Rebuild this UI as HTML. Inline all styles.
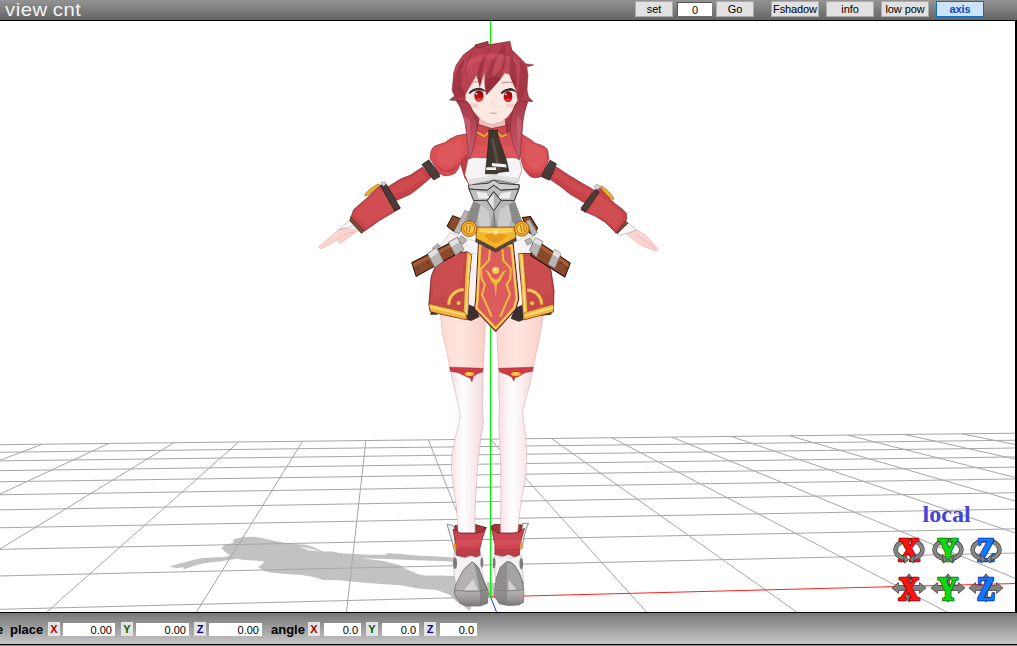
<!DOCTYPE html>
<html><head><meta charset="utf-8"><title>view cnt</title>
<style>
html,body{margin:0;padding:0;background:#fff;overflow:hidden}
body{width:1017px;height:646px;position:relative;font-family:"Liberation Sans",sans-serif}
#top{position:absolute;left:0;top:0;width:1017px;height:20px;background:linear-gradient(#939393,#646464);border-bottom:1px solid #000}
#ttl{position:absolute;left:5px;top:-1px;font-size:19.5px;line-height:20px;color:#f4f4f4;letter-spacing:.5px;word-spacing:-1px;white-space:nowrap;transform:scale(1.04,.94);transform-origin:0 16px}
.b{position:absolute;top:1px;height:14px;line-height:14px;border:1px solid #adadad;background:#e1e1e1;font-size:11px;letter-spacing:-.1px;text-align:center;color:#000;white-space:nowrap}
.b.ax{background:#cce4f7;border-color:#0a6fc9;color:#1043c4;font-weight:bold}
.tin{position:absolute;top:2px;height:13px;line-height:14px;background:#fff;font-size:11px;text-align:center;border-top:1px solid #555;border-left:1px solid #555}
#vp{position:absolute;left:0;top:21px;width:1015px;height:591px;background:#fff;overflow:hidden}
#rb{position:absolute;left:1015px;top:20px;width:2px;height:593px;background:#000}
#bot{position:absolute;left:0;top:612px;width:1017px;height:31px;border-top:1px solid #000;border-bottom:1px solid #000;background:linear-gradient(#787878,#c6c6c6)}
#bot2{position:absolute;left:0;top:645px;width:1017px;height:1px;background:#9a9a9a}
.lb{position:absolute;top:9px;font-size:13px;font-weight:bold;line-height:16px;color:#000;white-space:nowrap}
.k{position:absolute;top:9px;height:14px;width:12px;background:#e4e4e4;font-size:11px;font-weight:bold;line-height:14px;text-align:center}
.v{position:absolute;top:10px;height:13px;background:#fff;font-size:11px;line-height:14px;text-align:right;color:#000;box-sizing:border-box;padding-right:3px}
svg{position:absolute;left:0;top:0}
</style></head><body>
<div id="vp"><svg width="1015" height="591" viewBox="0 21 1015 591">
<!-- SHADOW (actual coords) -->
<path d="M169.4,566.7 L177.7,563.9 187.5,561.4 199.3,558.4 211.1,557.4 224.9,556.9 229.8,555.5 224.9,551.5 221.4,548.2 224.9,544.7 232.8,543.1 233.7,539.2 242.6,537.2 254.4,536.8 264.2,538.4 274.1,540.7 285.9,543.1 297.7,544.3 305.5,544.7 313.4,547 318.3,549.6 323.2,551.5 333.1,551.5 339.4,553.1 353.6,553.9 369.3,554.7 385.1,554.7 388.2,553.1 400.8,553.9 416.5,555.5 432.3,556.2 446.4,557 458,558 458,562 440.1,561 408.7,559.9 385.1,558.9 361.5,558.3 383.5,561 399.2,564.9 405.5,568.8 418.1,574.3 424.4,575.6 440.1,575.6 458,576.2 460,590 472,604 470,611 460.6,604.2 455.9,601.1 449.6,594.8 437,590.1 418.1,588.5 400.8,585.3 377.2,583.8 350.5,581.4 337,580.1 323.2,580.1 313.4,577.1 301.6,575.1 289.8,574.2 278,573.2 269.1,572.2 262.3,569.8 257.9,567.3 262.3,564.3 264.2,561.4 254.4,560.4 244.6,560 236.7,558.8 228.8,560 219,561.4 209.2,562.4 199.3,564.3 191.5,566.7 183.6,569.2 183.2,567.3 176.7,567.9Z" fill="#c2c2c2"/>
<path d="M487,582 L495,583 495.5,598 488,597Z" fill="#c2c2c2"/>
<path d="M299,546.5 L312,548.5 320,551.5 308,550.5Z" fill="#ececec"/>
<path d="M-2.0 609.4L490.5 596.9M-2.0 576.0L1017.0 553.0M-2.0 549.4L1017.0 528.8M-2.0 527.8L1017.0 509.1M-2.0 509.9L1017.0 492.7M-2.0 494.8L1017.0 478.9M-2.0 481.8L1017.0 467.1M-2.0 470.7L1017.0 456.9M-2.0 460.9L1017.0 448.0M-2.0 452.3L1017.0 440.2M-2.0 444.7L1017.0 433.2M-2.0 461.0L42.4 444.2M-2.0 495.0L108.6 443.5M-2.0 550.2L174.0 442.7M45.6 613.0L238.7 442.0M195.9 613.0L302.6 441.3M346.4 613.0L365.9 440.6M490.5 596.9L428.4 439.9M647.4 613.0L490.3 439.2M798.1 613.0L551.5 438.5M948.8 613.0L612.0 437.8M1017.0 579.1L671.9 437.1M1017.0 533.6L731.1 436.4M1017.0 501.6L789.7 435.8M1017.0 477.9L847.7 435.1M1017.0 459.5L905.1 434.5M1017.0 444.9L961.9 433.8" fill="none" stroke="#a6a6a6" stroke-width="1"/>
<path d="M490.5 596.9L1017.0 583.5" stroke="#ff2020" stroke-width="1" fill="none"/>
<path d="M496.9 613.0L490.5 596.9" stroke="#2030ff" stroke-width="1" fill="none"/>
<path d="M490.6 21V597" stroke="#00f400" stroke-width="1.25" fill="none"/>
<defs>
<linearGradient id="gSkinL" x1="0" x2="1"><stop offset="0" stop-color="#fbd9d2"/><stop offset=".45" stop-color="#fee6df"/><stop offset="1" stop-color="#f8cfc8"/></linearGradient>
<linearGradient id="gStk" x1="0" x2="1"><stop offset="0" stop-color="#f6dfe2"/><stop offset=".4" stop-color="#ffffff"/><stop offset="1" stop-color="#f3d9dd"/></linearGradient>
<linearGradient id="gHair" x1="0" y1="0" x2="0" y2="1"><stop offset="0" stop-color="#ae3a48"/><stop offset=".3" stop-color="#c04858"/><stop offset=".65" stop-color="#ae3c4a"/><stop offset="1" stop-color="#a23644"/></linearGradient>
<linearGradient id="gStr" x1="0" y1="0" x2="0" y2="1"><stop offset="0" stop-color="#a83a48"/><stop offset=".5" stop-color="#b84858"/><stop offset="1" stop-color="#cc6070"/></linearGradient>
<linearGradient id="gArm" x1="0" y1="0" x2="0" y2="1"><stop offset="0" stop-color="#c9c6c6"/><stop offset="1" stop-color="#a9a6a6"/></linearGradient>
<linearGradient id="gFoot" x1="0" y1="0" x2="0" y2="1"><stop offset="0" stop-color="#b9b5b5"/><stop offset=".6" stop-color="#9c9898"/><stop offset="1" stop-color="#7d7979"/></linearGradient>
</defs>
<!-- BOOT BACK RIMS: zoom B2 [440,515] x9.94 -->
<g transform="translate(440,515) scale(0.100604)" stroke-linejoin="round">
<path d="M130,140 L150,105 200,100 350,95 460,125 420,170 330,185 200,182Z" fill="#a8323c" stroke="#2a0c10" stroke-width="6"/>
<path d="M510,135 L512,108 545,92 600,95 770,95 815,100 840,130 790,170 700,185 570,180Z" fill="#a8323c" stroke="#2a0c10" stroke-width="6"/>
</g>
<!-- LEGS: zoom L1 [390,310] -->
<g transform="translate(390,310) scale(0.201207)" stroke-linejoin="round">
<path d="M245,-40 L250,20 262,120 280,200 298,290 463,295 470,150 474,30 474,-40Z" fill="url(#gSkinL)" stroke="#d98a8a" stroke-width="2"/>
<path d="M526,-40 L528,60 535,200 540,295 712,290 725,220 745,130 762,20 766,-40Z" fill="url(#gSkinL)" stroke="#d98a8a" stroke-width="2"/>
<path d="M298,288 L315,370 335,450 348,520 342,570 325,627 308,727 305,787 315,877 330,977 339,1107 423,1107 422,1007 428,897 435,777 450,647 464,560 459,480 462,400 463,292Z" fill="url(#gStk)" stroke="#c98a94" stroke-width="2"/>
<path d="M540,292 L540,400 545,480 540,560 545,647 550,777 551,947 549,1107 634,1107 652,947 675,827 680,727 675,627 662,542 660,500 675,440 695,370 712,288Z" fill="url(#gStk)" stroke="#c98a94" stroke-width="2"/>
<path d="M296,284 L463,290 460,308 432,318 415,330 407,357 398,338 378,330 340,312 300,304Z" fill="#cc3c44" stroke="#7a2026" stroke-width="2"/>
<path d="M540,290 L712,284 708,304 670,312 640,330 622,336 615,354 606,334 580,320 545,308Z" fill="#cc3c44" stroke="#7a2026" stroke-width="2"/>
<ellipse cx="395" cy="318" rx="24" ry="10" fill="#f4b62a"/><ellipse cx="392" cy="315" rx="12" ry="4" fill="#fde48a"/>
<ellipse cx="626" cy="318" rx="24" ry="10" fill="#f4b62a"/><ellipse cx="623" cy="315" rx="12" ry="4" fill="#fde48a"/>
</g>
<!-- BOOTS lower: zoom B3 [440,550] x9.94 -->
<g transform="translate(440,550) scale(0.100604)" stroke-linejoin="round">
<path d="M138,40 L180,60 240,82 300,60 360,76 410,50 426,100 412,200 440,300 470,390 300,400 160,350 148,300 135,200Z" fill="#f4f1f1" stroke="#8a8686" stroke-width="4"/>
<ellipse cx="150" cy="130" rx="20" ry="58" fill="#7e7a7a"/><ellipse cx="416" cy="125" rx="14" ry="50" fill="#7e7a7a"/>
<path d="M315,120 L230,200 165,330 145,400 150,450 200,530 270,556 400,556 470,530 479,440 470,390 430,300 385,180 340,130Z" fill="#8f8c8c" stroke="#3a3636" stroke-width="6"/>
<path d="M318,124 L232,202 168,330 148,400 300,410 395,405 340,132Z" fill="#b4b1b1"/>
<path d="M330,290 L378,400 235,400Z" fill="#d8d6d6"/>
<path d="M148,402 L300,412 395,407 470,392 478,440 470,528 400,553 270,553 200,528 152,450Z" fill="url(#gFoot)"/>
<path d="M395,407 L470,392 478,440 470,528 400,553Z" fill="#7c7979" opacity=".7"/>
<path d="M148,402 L300,412 395,407 470,392" fill="none" stroke="#5e5a5a" stroke-width="5"/>
<path d="M545,40 L600,76 650,56 700,80 760,60 802,50 816,100 820,200 832,330 700,400 560,350 548,250 540,150Z" fill="#f4f1f1" stroke="#8a8686" stroke-width="4"/>
<ellipse cx="538" cy="130" rx="14" ry="55" fill="#7e7a7a"/><ellipse cx="808" cy="135" rx="18" ry="58" fill="#7e7a7a"/>
<path d="M665,115 L600,170 560,280 545,400 548,470 590,535 680,551 780,546 830,520 833,420 825,330 790,230 740,150 700,120Z" fill="#a6a3a3" stroke="#3a3636" stroke-width="6"/>
<path d="M665,119 L602,172 563,280 548,400 665,405Z" fill="#908d8d"/>
<path d="M680,295 L762,392 680,397Z" fill="#d4d2d2"/>
<path d="M548,402 L665,407 832,397 833,420 830,518 780,543 680,548 590,532 550,470Z" fill="url(#gFoot)"/>
<path d="M548,402 L665,407 668,548 590,532 550,470Z" fill="#7c7979" opacity=".6"/>
<path d="M548,402 L665,407 832,397" fill="none" stroke="#5e5a5a" stroke-width="5"/>
</g>
<!-- BOOTS upper: zoom B2 [440,515] x9.94 -->
<g transform="translate(440,515) scale(0.100604)" stroke-linejoin="round">
<path d="M70,95 L120,100 150,130 135,150 150,260 168,392 150,380 110,230Z" fill="#f0eeee" stroke="#2a2a2a" stroke-width="5"/>
<path d="M130,140 L200,180 330,183 420,168 460,125 420,240 395,340 400,395 370,415 300,400 250,420 165,400 150,250Z" fill="#cd4550" stroke="#4a1218" stroke-width="5"/>
<path d="M150,250 L420,240 410,290 160,310Z" fill="#d9555f" opacity=".6"/>
<path d="M160,330 L398,330 398,392 370,412 300,398 250,418 166,398Z" fill="#b93a45" opacity=".7"/>
<ellipse cx="150" cy="320" rx="12" ry="40" transform="rotate(-8 150 320)" fill="#e0a020"/>
<path d="M820,85 L880,80 860,130 840,200 815,340 800,330 800,280Z" fill="#f0eeee" stroke="#2a2a2a" stroke-width="5"/>
<path d="M510,135 L570,178 700,184 790,168 840,130 800,280 790,395 740,415 680,390 620,410 545,390 545,290Z" fill="#cd4550" stroke="#4a1218" stroke-width="5"/>
<path d="M540,250 L805,245 800,295 545,305Z" fill="#d9555f" opacity=".6"/>
<path d="M546,335 L796,330 790,393 740,413 680,388 620,408 546,388Z" fill="#b93a45" opacity=".7"/>
<ellipse cx="805" cy="300" rx="11" ry="38" transform="rotate(10 805 300)" fill="#e0a020"/>
</g>
<!-- HEAD BACK: zoom H2 [440,35] x9.94 -->
<g transform="translate(440,35) scale(0.100604)" stroke-linejoin="round">
<!-- hair back silhouette -->
<path d="M95,647 L145,607 120,547 130,450 135,380 160,300 230,200 345,112 352,98 475,65 482,95 500,95 695,62 715,150 790,220 850,285 930,298 862,318 875,400 870,450 865,547 880,617 925,662 870,662 845,747 740,800 725,990 360,990 340,800 190,697 160,652Z" fill="url(#gHair)" stroke="#5a1a28" stroke-width="5"/>
<!-- neck -->
<path d="M400,800 L640,800 652,930 375,930Z" fill="#eec2ba"/>
</g>
<!-- TORSO: zoom T1 [400,110] -->
<g transform="translate(400,110) scale(0.201207)" stroke-linejoin="round">
<!-- neck -->
<!-- puff sleeves -->
<path d="M299,269 L319,334 334,359 344,374 348,250 334,224 309,245Z" fill="#bc3e44"/>
<path d="M352,116 L284,127 Q250,140 224,162 Q190,172 169,182 Q152,195 150,234 L150,242 194,314 Q215,328 229,327 Q255,326 274,314 Q292,295 299,269 L309,245 334,224 352,240Z" fill="#d84f54" stroke="#7a2028" stroke-width="3"/>
<path d="M200,185 Q250,160 300,150 L320,200 Q290,250 250,275 Q210,280 180,250Z" fill="#e26064" opacity=".55"/>
<path d="M160,240 L200,300 Q230,318 270,305 Q290,285 296,262 Q260,300 220,300 Q185,280 160,240Z" fill="#b4383e" opacity=".6"/>
<path d="M598,116 L632,137 Q655,150 672,165 Q700,172 717,182 Q732,192 735,205 L740,245 702,330 Q685,338 667,337 Q652,335 642,325 Q622,305 612,285 L600,240 596,200Z" fill="#d84f54" stroke="#7a2028" stroke-width="3"/>
<path d="M625,155 Q670,175 715,195 L725,240 Q705,285 675,300 Q640,290 620,240Z" fill="#e26064" opacity=".55"/>
<path d="M612,285 Q625,315 650,330 Q680,340 702,328 L712,305 Q680,322 650,310 Q625,295 612,285Z" fill="#b4383e" opacity=".6"/>
<!-- grey abdomen -->
<path d="M341,372 L466,346 593,372 593,385 568,451 586,500 603,548 615,600 330,600 331,548 348,500 368,451 341,385Z" fill="#b2b0b0" stroke="#3a3636" stroke-width="3"/>
<path d="M368,451 L433,451 466,501 503,451 568,451 586,500 603,548 615,600 330,600 331,548 348,500Z" fill="#b9b7b7"/>
<path d="M395,470 L440,500 452,600 400,600 385,520Z M540,470 L495,500 482,600 540,600 552,520Z" fill="#d2d0d0" opacity=".8"/>
<path d="M466,501 L490,600 445,600Z" fill="#9a9898"/>
<path d="M368,455 L400,470 380,560 335,585 331,548 348,500Z M568,455 L540,470 560,560 610,585 603,548 586,500Z" fill="#8c8989"/>
<path d="M341,372 L438,364 466,348 493,364 593,372 590,393 500,399 466,374 433,399 343,393Z" fill="#cfcdcd" stroke="#2e2a2a" stroke-width="4.5"/>
<path d="M343,393 L433,399 466,374 500,399 590,393 568,450 503,449 466,406 433,449 366,450Z" fill="#bfbdbd" stroke="#2e2a2a" stroke-width="4.5"/>
<path d="M380,405 L430,412 445,440 390,440Z M552,405 L502,412 488,440 545,440Z" fill="#efeded"/>
<path d="M466,406 L503,451 466,501 433,451Z" fill="#b4b2b2" stroke="#2e2a2a" stroke-width="4.5"/>
<path d="M466,412 L466,495 438,451Z" fill="#e6e4e4"/>
<path d="M466,501 L472,600" stroke="#5a5656" stroke-width="3"/>
<!-- red upper chest -->
<path d="M368,108 L602,112 594,248 338,248Z" fill="#d64e54"/>
<path d="M380,180 L590,180 592,246 340,246Z" fill="#df5a5e" opacity=".7"/>
<!-- white breast -->
<path d="M338,246 Q360,232 400,238 L545,238 Q580,234 596,250 L606,300 584,360 520,352 470,344 420,356 346,372 322,322Z" fill="#f5f3f3" stroke="#6a6666" stroke-width="2.5"/>
<path d="M346,372 L420,356 470,344 520,352 584,360 590,335 520,330 470,318 420,332 330,345Z" fill="#dcdada" opacity=".8"/>
<!-- collar -->
<path d="M385,70 L455,92 532,76 530,126 505,136 460,98 420,134 378,116Z" fill="#cc464c" stroke="#6a1820" stroke-width="3"/>
<path d="M379,110 L420,131 456,96 M466,96 L506,133 531,121" fill="none" stroke="#e8b030" stroke-width="9"/>
<!-- tie -->
<path d="M441,99 L484,99 489,139 529,250 541,304 486,311 484,317 424,317 431,250 442,139Z" fill="#40372f" stroke="#1a1412" stroke-width="3"/>
<path d="M466,140 L500,298 486,304 452,140Z" fill="#5a5048"/>
<path d="M430,284 L478,284 478,298 427,298Z M456,264 L526,270 531,286 458,280Z" fill="#f2f0f0"/>
</g>
<!-- SKIRT & BELT: zoom SK [390,210] -->
<g transform="translate(390,210) scale(0.201207)" stroke-linejoin="round">
<!-- dark underskirt -->
<path d="M392,462 L428,464 432,500 445,530 404,552 384,546Z M626,470 L662,446 666,546 640,555 600,540Z M205,500 L240,520 200,520Z M700,530 L810,500 800,520Z" fill="#3a3030"/>
<!-- white hip cloth -->
<path d="M250,175 L300,112 440,160 440,222 383,210 290,218 243,255Z" fill="#f6f4f4" stroke="#9a9494" stroke-width="2"/>
<path d="M610,165 L690,125 748,170 765,235 700,218 640,218 612,222Z" fill="#f6f4f4" stroke="#9a9494" stroke-width="2"/>
<!-- white strips -->
<path d="M400,222 L445,215 428,485 392,470Z" fill="#f4f2f2"/>
<path d="M608,215 L645,215 660,470 628,485Z" fill="#f4f2f2"/>
<!-- left panel -->
<path d="M383,208 L406,222 393,350 384,546 200,506 193,470 205,330 235,255 290,216Z" fill="#c4474a" stroke="#6a1820" stroke-width="4"/>
<path d="M240,260 L300,222 370,215 360,330 340,400 300,420 215,440 210,330Z" fill="#d25456" opacity=".5"/>
<path d="M383,210 L405,223 393,350 387,522 366,516 374,350Z" fill="#efb93a"/>
<path d="M392,225 L399,228 388,350 381,515 376,514 384,350Z" fill="#fde9a0"/>
<path d="M194,466 L372,508 383,546 201,504Z" fill="#efb93a" stroke="#8a3a10" stroke-width="2"/>
<path d="M196,476 L374,519 376,527 198,484Z" fill="#fde08a"/>
<path d="M292,470 A74,74 0 0 1 366,396" fill="none" stroke="#efb93a" stroke-width="16"/>
<path d="M292,470 A74,74 0 0 1 366,396" fill="none" stroke="#fde08a" stroke-width="4"/>
<circle cx="341" cy="462" r="10" fill="#f6c040"/>
<!-- right panel -->
<path d="M640,216 L700,216 762,234 800,300 815,400 812,506 665,546 655,400 645,300Z" fill="#c4474a" stroke="#6a1820" stroke-width="4"/>
<path d="M670,225 L755,240 795,310 805,420 720,420 690,380 675,300Z" fill="#d25456" opacity=".5"/>
<path d="M640,216 L662,219 672,350 684,520 663,546 652,350Z" fill="#efb93a"/>
<path d="M649,222 L655,222 665,350 675,522 670,528 659,350Z" fill="#fde9a0"/>
<path d="M666,510 L812,468 812,506 665,546Z" fill="#efb93a" stroke="#8a3a10" stroke-width="2"/>
<path d="M668,522 L812,480 812,488 668,530Z" fill="#fde08a"/>
<path d="M682,398 A72,72 0 0 1 754,470" fill="none" stroke="#efb93a" stroke-width="16"/>
<path d="M682,398 A72,72 0 0 1 754,470" fill="none" stroke="#fde08a" stroke-width="4"/>
<circle cx="706" cy="463" r="10" fill="#f6c040"/>
<!-- center tabard -->
<path d="M440,160 L612,165 640,440 626,492 525,603 420,492 426,440Z" fill="#dc5c5e" stroke="#5a141c" stroke-width="5"/>
<path d="M448,172 L604,176 630,440 617,488 525,588 430,488 435,440Z" fill="none" stroke="#efb93a" stroke-width="13"/>
<path d="M448,172 L604,176 630,440 617,488 525,588 430,488 435,440Z" fill="none" stroke="#fde9a0" stroke-width="3.5"/>
<path d="M497,190 L492,250 452,292 455,340 472,372 457,420 475,460 505,530 M558,190 L563,250 600,292 598,340 580,372 596,420 578,460 548,530" fill="none" stroke="#f0bc3c" stroke-width="10"/>
<circle cx="525" cy="300" r="18" fill="#f8c848"/><circle cx="522" cy="296" r="8" fill="#fdeaa0"/>
<path d="M470,298 Q490,300 500,322 Q512,345 525,345 Q538,345 550,322 Q560,300 582,298 Q565,312 556,335 Q545,362 532,366 L526,432 518,366 Q505,362 494,335 Q486,312 470,298Z" fill="#f0bc3c"/>
<!-- torso bottom -->
<!-- brown straps -->
<path d="M108,262 L330,148 356,205 130,330Z" fill="#8a4a2a" stroke="#2a0c06" stroke-width="5"/>
<path d="M112,268 L330,156 334,168 116,282Z" fill="#a86038"/>
<path d="M284,80 L312,28 354,44 336,72 318,108Z" fill="#8a4a2a" stroke="#2a0c06" stroke-width="5"/>
<path d="M708,168 L740,160 896,264 869,333 700,226Z" fill="#8a4a2a" stroke="#2a0c06" stroke-width="5"/>
<path d="M742,168 L890,268 886,282 736,180Z" fill="#a86038"/>
<path d="M658,37 L698,32 733,90 718,125 693,115Z" fill="#8a4a2a" stroke="#2a0c06" stroke-width="5"/>
<circle cx="140" cy="290" r="4" fill="#3a1a0c"/><circle cx="188" cy="262" r="4" fill="#3a1a0c"/><circle cx="850" cy="262" r="4" fill="#3a1a0c"/><circle cx="872" cy="290" r="4" fill="#3a1a0c"/>
<!-- metal clasps -->
<g fill="#b9b5b5" stroke="#6a6666" stroke-width="3">
<path d="M186,216 L232,184 266,255 222,286Z"/><path d="M210,190 L238,168 250,182 232,196Z"/>
<path d="M290,160 L336,134 368,196 326,226Z"/>
<path d="M336,150 L356,128 382,150 362,170Z"/>
<path d="M372,2 L392,10 345,118 316,108Z"/>
<path d="M723,137 L760,156 728,235 693,200Z"/>
<path d="M818,195 L850,217 820,290 785,270Z"/>
<path d="M670,150 L698,140 708,160 683,175Z"/>
<path d="M675,55 L693,47 733,112 708,132Z"/>
</g>
<g fill="#e4e2e2"><path d="M190,218 L230,190 240,210 200,240Z"/><path d="M294,162 L334,140 344,160 304,184Z"/><path d="M723,140 L757,157 748,178 712,160Z"/><path d="M818,198 L847,218 838,240 808,220Z"/></g>
<!-- belt center -->
<path d="M427,142 L525,192 626,137 629,152 525,210 425,158Z" fill="#4a4848" stroke="#222" stroke-width="2"/>
<path d="M430,85 L620,85 626,137 525,192 428,142Z" fill="#f4b62e" stroke="#7a3a08" stroke-width="4"/>
<path d="M445,92 L606,92 610,108 525,120 442,108Z" fill="#fbd460"/>
<path d="M470,125 Q525,100 580,125 L560,150 525,165 490,150Z" fill="#e79a1c"/>
<circle cx="525" cy="112" r="12" fill="#fde48a"/>
<!-- medallions -->
<circle cx="393" cy="93" r="39" fill="#f2b22c" stroke="#8a4a08" stroke-width="4"/><circle cx="393" cy="93" r="27" fill="#f8c84a" stroke="#b86a10" stroke-width="4"/><path d="M383,78 L378,112 M400,74 L392,112" stroke="#b86a10" stroke-width="5"/>
<circle cx="655" cy="93" r="37" fill="#f2b22c" stroke="#8a4a08" stroke-width="4"/><circle cx="655" cy="93" r="25" fill="#f8c84a" stroke="#b86a10" stroke-width="4"/><path d="M648,76 L656,110 M664,76 L668,108" stroke="#b86a10" stroke-width="5"/>
</g>
<!-- LEFT ARM (viewer left): zoom AL [300,130] -->
<g transform="translate(300,130) scale(0.201207)" stroke-linejoin="round">
<!-- hand -->
<path d="M192,495 L225,490 270,493 285,503 250,528 215,553 200,565 192,558 195,540 150,568 105,590 92,583 125,553 165,518Z" fill="#fbd5d0" stroke="#d98a8a" stroke-width="2"/>
<path d="M195,540 L232,515 272,505" fill="none" stroke="#e8a0a0" stroke-width="3"/>
<!-- frill -->
<path d="M252,445 L205,483 195,495 225,488 265,478 285,498 300,503 260,453Z" fill="#f8f6f6" stroke="#8a8686" stroke-width="2"/>
<!-- brown cuff -->
<path d="M252,430 L322,500 306,514 248,452Z" fill="#7a4a34" stroke="#3a1a10" stroke-width="3"/>
<!-- upper arm -->
<path d="M609,184 L549,224 499,244 434,284 479,350 549,319 589,289 654,234Z" fill="#c74248" stroke="#7a2028" stroke-width="3"/>
<path d="M600,205 L549,238 499,258 450,290 470,318 540,290 580,265 625,232Z" fill="#d45256" opacity=".6"/>
<!-- gauntlet -->
<path d="M398,276 L426,268 497,390 395,450 322,502 254,432 266,396 330,340Z" fill="#c6444a" stroke="#6a1820" stroke-width="3"/>
<path d="M395,290 L470,395 330,480 270,420 280,398Z" fill="#d45256" opacity=".7"/>
<path d="M400,276 L426,266 499,388 470,402Z" fill="#4a3c38" stroke="#1a1010" stroke-width="3"/>
<!-- gold ring -->
<ellipse cx="358" cy="298" rx="46" ry="9" transform="rotate(-38 358 298)" fill="#f0b030" stroke="#9a5a10" stroke-width="3"/>
<path d="M402,262 L420,256 428,270 412,280Z" fill="#d9d6d6" stroke="#5a5656" stroke-width="2"/>
<!-- cuff dark -->
<path d="M606,172 L640,148 690,215 695,232 664,248Z" fill="#4a3c38" stroke="#1a1010" stroke-width="3"/>
</g>
<!-- RIGHT ARM (viewer right): zoom AR [480,130] -->
<g transform="translate(480,130) scale(0.201207)" stroke-linejoin="round">
<path d="M717,508 L787,498 827,528 887,593 877,604 837,588 797,571 767,548Z" fill="#fbd5d0" stroke="#d98a8a" stroke-width="2"/>
<path d="M780,520 L830,560 870,590" fill="none" stroke="#e8a0a0" stroke-width="3"/>
<path d="M682,516 L735,461 777,496 740,512 712,518 697,524Z" fill="#f8f6f6" stroke="#8a8686" stroke-width="2"/>
<path d="M662,486 L720,448 735,463 682,516Z" fill="#7a4a34" stroke="#3a1a10" stroke-width="3"/>
<path d="M376,182 L448,229 498,259 568,299 523,364 448,319 398,279 346,244Z" fill="#c74248" stroke="#7a2028" stroke-width="3"/>
<path d="M380,200 L448,243 498,273 552,303 535,330 460,290 405,255 368,230Z" fill="#d45256" opacity=".6"/>
<path d="M576,298 L598,290 667,363 707,393 727,413 730,443 675,513 662,498 622,458 572,428 500,396Z" fill="#c6444a" stroke="#6a1820" stroke-width="3"/>
<path d="M590,320 L660,375 700,410 712,440 672,490 620,440 540,405Z" fill="#d45256" opacity=".7"/>
<path d="M574,294 L592,308 522,410 503,386Z" fill="#4a3c38" stroke="#1a1010" stroke-width="3"/>
<ellipse cx="632" cy="312" rx="46" ry="9" transform="rotate(45 632 312)" fill="#f0b030" stroke="#9a5a10" stroke-width="3"/>
<path d="M566,282 L580,268 598,280 584,298Z" fill="#d9d6d6" stroke="#5a5656" stroke-width="2"/>
<path d="M348,150 L380,168 345,250 305,232 322,195Z" fill="#4a3c38" stroke="#1a1010" stroke-width="3"/>
</g>
<!-- HEAD: zoom H2 [440,35] x9.94 -->
<g transform="translate(440,35) scale(0.100604)" stroke-linejoin="round">
<!-- face -->
<path d="M365,400 L385,470 395,520 420,440 445,375 440,450 450,540 460,597 530,520 600,440 645,378 690,392 720,470 755,545 762,600 770,650 745,697 722,747 672,817 602,867 532,888 470,878 400,838 332,757 300,702 255,650 252,600 270,560 300,510 340,440Z" fill="#fde8e2" stroke="#b87878" stroke-width="3.5"/>
<!-- blush -->
<ellipse cx="335" cy="700" rx="45" ry="22" fill="#f8b8b8" opacity=".6"/><ellipse cx="700" cy="700" rx="42" ry="22" fill="#f8b8b8" opacity=".6"/>
<!-- eyes -->
<path d="M296,568 Q330,535 400,537 Q440,545 448,570 L440,640 Q400,670 345,655 Q305,630 296,568Z" fill="#ece4e4"/>
<ellipse cx="387" cy="607" rx="46" ry="56" fill="#d41414"/><ellipse cx="387" cy="590" rx="42" ry="36" fill="#8e0c10"/><ellipse cx="388" cy="612" rx="22" ry="30" fill="#c00a0a"/><ellipse cx="390" cy="640" rx="26" ry="16" fill="#f23030"/><circle cx="362" cy="585" r="10" fill="#fff"/>
<path d="M284,576 Q318,524 400,524 Q442,534 456,566 Q420,552 390,550 Q332,552 300,586Z" fill="#3e2c30"/>
<path d="M612,568 Q640,540 700,540 Q740,548 758,570 L745,650 Q700,672 650,655 Q620,630 612,568Z" fill="#ece4e4"/>
<ellipse cx="676" cy="612" rx="43" ry="54" fill="#d41414"/><ellipse cx="676" cy="596" rx="40" ry="35" fill="#8e0c10"/><ellipse cx="677" cy="617" rx="21" ry="29" fill="#c00a0a"/><ellipse cx="678" cy="645" rx="25" ry="15" fill="#f23030"/><circle cx="652" cy="590" r="10" fill="#fff"/>
<path d="M602,576 Q638,528 705,528 Q748,538 768,574 Q735,556 700,554 Q646,554 616,588Z" fill="#3e2c30"/>
<!-- brows -->
<path d="M330,470 Q370,458 410,470 M610,478 Q660,462 720,472" fill="none" stroke="#7a2a38" stroke-width="5"/>
<!-- nose mouth -->
<path d="M530,665 L540,700" stroke="#d9a8a4" stroke-width="7" opacity=".7"/>
<path d="M495,777 L565,777" stroke="#b06a80" stroke-width="6"/>
<!-- hair highlights/shading -->
<path d="M250,290 Q340,200 480,185 Q620,175 750,240 L765,285 Q640,225 500,240 Q360,255 262,335Z" fill="#d85c6c" opacity=".5"/>
<path d="M460,597 L445,500 460,380 520,250 600,150 640,100 662,180 645,300 600,440Z" fill="#902a38" opacity=".5"/>
<path d="M560,200 Q600,170 640,200 L610,330 Q560,380 520,420 Q530,300 560,200Z" fill="#d85c6c" opacity=".55"/>
<path d="M365,400 L400,280 460,170 425,300 395,520Z" fill="#8a2634" opacity=".6"/>
<path d="M690,392 L700,280 680,170 740,260 760,400 755,545Z" fill="#8a2634" opacity=".5"/>
<path d="M140,420 L190,300 250,230 215,360 212,500 250,600 160,640 130,560Z" fill="#8e2a38" opacity=".55"/>
<path d="M800,260 L850,300 870,400 862,540 800,640 770,600 790,450Z" fill="#902a38" opacity=".45"/>
<path d="M352,100 L475,66 480,96 420,120 365,128Z" fill="#a83a48" stroke="#5a1a28" stroke-width="4"/>
<path d="M500,110 Q450,240 410,380 M330,150 Q250,300 215,450 T232,560 M700,130 Q735,250 762,400 M790,230 Q835,350 842,450 M620,110 Q560,260 470,420 M300,200 Q240,330 262,470" fill="none" stroke="#86222e" stroke-width="5" opacity=".7"/>
<path d="M460,597 L447,500 470,430 560,400 600,440 530,520Z" fill="#8a2432" opacity=".45"/>
<path d="M395,520 L385,470 372,420 420,440Z M755,545 L720,470 700,420 752,450Z" fill="#8a2432" opacity=".45"/>
<!-- strands -->
<path d="M165,655 L190,697 225,790 246,865 266,1005 278,1145 292,1232 314,1175 346,1065 368,950 366,877 335,787 300,702 270,660Z" fill="url(#gStr)" stroke="#5a1a28" stroke-width="4"/>
<path d="M230,800 L260,900 285,1100 300,1000 300,850Z" fill="#d46a78" opacity=".6"/>
<path d="M745,697 L722,760 702,850 698,945 722,1065 762,1175 786,1242 802,1145 814,1005 826,865 838,790 848,740 870,665 800,650Z" fill="url(#gStr)" stroke="#5a1a28" stroke-width="4"/>
<path d="M770,800 L760,900 775,1100 800,1000 810,850Z" fill="#d46a78" opacity=".6"/>
</g>
<!-- ICONS: zoom [880,495] x5.518 -->
<g transform="translate(880,495) scale(0.181225)" font-family="'Liberation Serif',serif" font-weight="bold" stroke-linejoin="round">
<text x="235" y="148" font-size="132" fill="#4444d8" textLength="266" lengthAdjust="spacingAndGlyphs">local</text>
<path d="M86,302 A74,52 0 0 1 234,302" fill="none" stroke="#3c3c3c" stroke-width="25"/><path d="M86,304 A74,52 0 0 1 234,304" fill="none" stroke="#858585" stroke-width="18"/><text x="160" y="362" font-size="186" textLength="117" lengthAdjust="spacingAndGlyphs" text-anchor="middle" fill="#ff1414" stroke="#7a0000" stroke-width="14">X</text><text x="160" y="362" font-size="186" textLength="117" lengthAdjust="spacingAndGlyphs" text-anchor="middle" fill="#ff1414" stroke="#ff1414" stroke-width="5">X</text><path d="M86,300 A74,52 0 0 0 144,353 M176,353 A74,52 0 0 0 234,300" fill="none" stroke="#3c3c3c" stroke-width="25"/><path d="M86,298 A74,52 0 0 0 142,353 M178,353 A74,52 0 0 0 234,298" fill="none" stroke="#858585" stroke-width="18"/><path d="M130,330 L158,356 134,376Z M190,330 L162,356 186,376Z" fill="#858585" stroke="#3c3c3c" stroke-width="4"/>
<path d="M301,302 A74,52 0 0 1 449,302" fill="none" stroke="#3c3c3c" stroke-width="25"/><path d="M301,304 A74,52 0 0 1 449,304" fill="none" stroke="#858585" stroke-width="18"/><text x="375" y="362" font-size="186" textLength="112" lengthAdjust="spacingAndGlyphs" text-anchor="middle" fill="#10d818" stroke="#005a00" stroke-width="14">Y</text><text x="375" y="362" font-size="186" textLength="112" lengthAdjust="spacingAndGlyphs" text-anchor="middle" fill="#10d818" stroke="#10d818" stroke-width="5">Y</text><path d="M301,300 A74,52 0 0 0 359,353 M391,353 A74,52 0 0 0 449,300" fill="none" stroke="#3c3c3c" stroke-width="25"/><path d="M301,298 A74,52 0 0 0 357,353 M393,353 A74,52 0 0 0 449,298" fill="none" stroke="#858585" stroke-width="18"/><path d="M345,330 L373,356 349,376Z M405,330 L377,356 401,376Z" fill="#858585" stroke="#3c3c3c" stroke-width="4"/>
<path d="M511,302 A74,52 0 0 1 659,302" fill="none" stroke="#3c3c3c" stroke-width="25"/><path d="M511,304 A74,52 0 0 1 659,304" fill="none" stroke="#858585" stroke-width="18"/><text x="585" y="362" font-size="186" textLength="102" lengthAdjust="spacingAndGlyphs" text-anchor="middle" fill="#1478ff" stroke="#00288a" stroke-width="14">Z</text><text x="585" y="362" font-size="186" textLength="102" lengthAdjust="spacingAndGlyphs" text-anchor="middle" fill="#1478ff" stroke="#1478ff" stroke-width="5">Z</text><path d="M511,300 A74,52 0 0 0 569,353 M601,353 A74,52 0 0 0 659,300" fill="none" stroke="#3c3c3c" stroke-width="25"/><path d="M511,298 A74,52 0 0 0 567,353 M603,353 A74,52 0 0 0 659,298" fill="none" stroke="#858585" stroke-width="18"/><path d="M555,330 L583,356 559,376Z M615,330 L587,356 611,376Z" fill="#858585" stroke="#3c3c3c" stroke-width="4"/>
<path d="M160,435 L180,461 168,461 168,565 180,565 160,591 140,565 152,565 152,461 140,461Z" fill="#808080" stroke="#3c3c3c" stroke-width="4"/><path d="M66,513 L102,483 102,499 218,499 218,483 254,513 218,543 218,527 102,527 102,543Z" fill="#808080" stroke="#3c3c3c" stroke-width="4"/><text x="160" y="578" font-size="186" textLength="117" lengthAdjust="spacingAndGlyphs" text-anchor="middle" fill="#ff1414" stroke="#7a0000" stroke-width="14">X</text><text x="160" y="578" font-size="186" textLength="117" lengthAdjust="spacingAndGlyphs" text-anchor="middle" fill="#ff1414" stroke="#ff1414" stroke-width="5">X</text>
<path d="M375,435 L395,461 383,461 383,565 395,565 375,591 355,565 367,565 367,461 355,461Z" fill="#808080" stroke="#3c3c3c" stroke-width="4"/><path d="M281,513 L317,483 317,499 433,499 433,483 469,513 433,543 433,527 317,527 317,543Z" fill="#808080" stroke="#3c3c3c" stroke-width="4"/><text x="375" y="578" font-size="186" textLength="112" lengthAdjust="spacingAndGlyphs" text-anchor="middle" fill="#10d818" stroke="#005a00" stroke-width="14">Y</text><text x="375" y="578" font-size="186" textLength="112" lengthAdjust="spacingAndGlyphs" text-anchor="middle" fill="#10d818" stroke="#10d818" stroke-width="5">Y</text>
<path d="M585,435 L605,461 593,461 593,565 605,565 585,591 565,565 577,565 577,461 565,461Z" fill="#808080" stroke="#3c3c3c" stroke-width="4"/><path d="M491,513 L527,483 527,499 643,499 643,483 679,513 643,543 643,527 527,527 527,543Z" fill="#808080" stroke="#3c3c3c" stroke-width="4"/><text x="585" y="578" font-size="186" textLength="102" lengthAdjust="spacingAndGlyphs" text-anchor="middle" fill="#1478ff" stroke="#00288a" stroke-width="14">Z</text><text x="585" y="578" font-size="186" textLength="102" lengthAdjust="spacingAndGlyphs" text-anchor="middle" fill="#1478ff" stroke="#1478ff" stroke-width="5">Z</text>
</g>
</svg></div>
<div id="top"><div id="ttl">view cnt</div>
<div class="b" style="left:635px;width:36px">set</div>
<div class="tin" style="left:677px;width:34px">0</div>
<div class="b" style="left:716px;width:36px">Go</div>
<div class="b" style="left:771px;width:46px">Fshadow</div>
<div class="b" style="left:826px;width:46px">info</div>
<div class="b" style="left:881px;width:46px">low pow</div>
<div class="b ax" style="left:936px;width:46px">axis</div>
</div>
<div id="rb"></div>
<div id="bot">
<div class="lb" style="left:-4px">e</div>
<div class="lb" style="left:10px">place</div>
<div class="k" style="left:48px;color:#a00000">X</div><div class="v" style="left:63px;width:52px">0.00</div>
<div class="k" style="left:121px;color:#006000">Y</div><div class="v" style="left:136px;width:53px">0.00</div>
<div class="k" style="left:194px;color:#0000a0">Z</div><div class="v" style="left:209px;width:53px">0.00</div>
<div class="lb" style="left:271px">angle</div>
<div class="k" style="left:308px;color:#a00000">X</div><div class="v" style="left:324px;width:37px">0.0</div>
<div class="k" style="left:366px;color:#006000">Y</div><div class="v" style="left:382px;width:37px">0.0</div>
<div class="k" style="left:424px;color:#0000a0">Z</div><div class="v" style="left:440px;width:37px">0.0</div>
</div>
<div id="bot2"></div>
</body></html>
